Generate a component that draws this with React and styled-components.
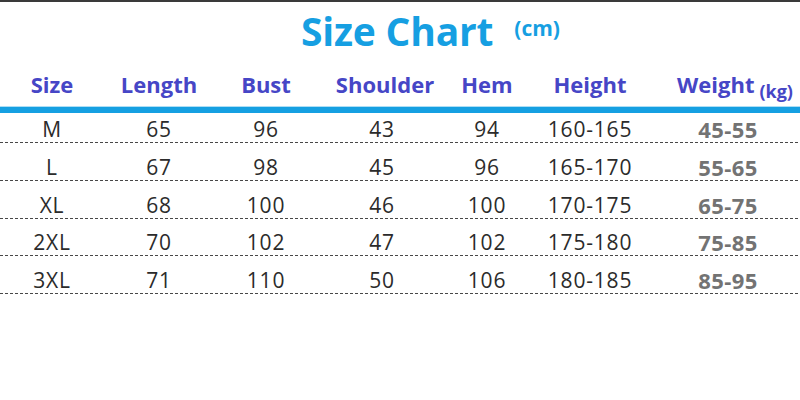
import React from "react";
import styled, { createGlobalStyle } from "styled-components";

const Global = createGlobalStyle`
  html, body { margin: 0; padding: 0; background: #ffffff; }
  body { font-family: "Open Sans", "Liberation Sans", sans-serif; }
`;

const COLS = "104px 110px 104px 128px 82px 124px 148px";

const Page = styled.div`
  width: 800px;
  height: 400px;
  box-sizing: border-box;
  border-top: 2px solid #3a3a3a;
  background: #ffffff;
  display: flex;
  flex-direction: column;
  overflow: hidden;
`;

const TitleRow = styled.div`
  display: flex;
  align-items: flex-start;
  padding-left: 301px;
  padding-top: 2px;
  box-sizing: border-box;
  gap: 21px;
  height: 53px;
`;

const Title = styled.h1`
  margin: 0;
  font-family: "Open Sans", sans-serif;
  font-weight: 700;
  font-size: 39px;
  line-height: normal;
  color: #169fe2;
  letter-spacing: -0.2px;
`;

const Unit = styled.span`
  margin-top: 10px;
  font-family: "Open Sans", sans-serif;
  font-weight: 700;
  font-size: 21px;
  line-height: normal;
  color: #169fe2;
`;

const HeaderRow = styled.div`
  display: grid;
  grid-template-columns: ${COLS};
  margin-top: 14px;
  height: 30px;
`;

const HeadCell = styled.div`
  text-align: center;
  font-family: "Open Sans", sans-serif;
  font-weight: 700;
  font-size: 22px;
  line-height: normal;
  color: #4646c6;
  padding-left: ${(p) => p.$shift || 0}px;
  white-space: nowrap;
`;

const Small = styled.span`
  font-size: 18px;
  vertical-align: -5px;
  margin-left: 5px;
`;

const Bar = styled.div`
  margin-top: 8px;
  height: 6px;
  background: #16a0e2;
  box-shadow: 0 -1px 0 rgba(22, 160, 226, 0.35);
`;

const Row = styled.div`
  display: grid;
  grid-template-columns: ${COLS};
  align-items: end;
  height: ${(p) => p.$h}px;
  box-sizing: border-box;
  padding-bottom: 1px;
  background-image: repeating-linear-gradient(
    to right,
    #474747 0 3px,
    transparent 3px 5px
  );
  background-size: 100% 1px;
  background-position: left bottom;
  background-repeat: no-repeat;
`;

const Cell = styled.div`
  text-align: center;
  font-family: "Open Sans", sans-serif;
  font-size: 21px;
  line-height: normal;
  letter-spacing: 0.8px;
  color: #2b2b2b;
  white-space: nowrap;
  padding-left: ${(p) => p.$shift || 0}px;
  margin-bottom: -1px;
`;

const WeightCell = styled(Cell)`
  font-weight: 700;
  font-size: 22px;
  letter-spacing: 0.4px;
  color: #737373;
  margin-bottom: -2px;
`;

const headers = ["Size", "Length", "Bust", "Shoulder", "Hem", "Height"];
const shifts = [0, 0, 0, -8, 0, 0];

const data = [
  ["M", "65", "96", "43", "94", "160-165", "45-55"],
  ["L", "67", "98", "45", "96", "165-170", "55-65"],
  ["XL", "68", "100", "46", "100", "170-175", "65-75"],
  ["2XL", "70", "102", "47", "102", "175-180", "75-85"],
  ["3XL", "71", "110", "50", "106", "180-185", "85-95"],
];

export default function App() {
  return (
    <>
      <Global />
      <Page>
        <TitleRow>
          <Title>Size Chart</Title>
          <Unit>(cm)</Unit>
        </TitleRow>
        <HeaderRow>
          {headers.map((h, i) => (
            <HeadCell key={h} $shift={i === 3 ? 6 : 0}>
              {h}
            </HeadCell>
          ))}
          <HeadCell $shift={18}>
            Weight<Small>(kg)</Small>
          </HeadCell>
        </HeaderRow>
        <Bar />
        {data.map((r, i) => (
          <Row key={r[0]} $h={i === 0 ? 30 : 37.75}>
            {r.slice(0, 6).map((v, j) => (
              <Cell key={j} $shift={shifts[j]}>
                {v}
              </Cell>
            ))}
            <WeightCell $shift={4}>{r[6]}</WeightCell>
          </Row>
        ))}
      </Page>
    </>
  );
}
